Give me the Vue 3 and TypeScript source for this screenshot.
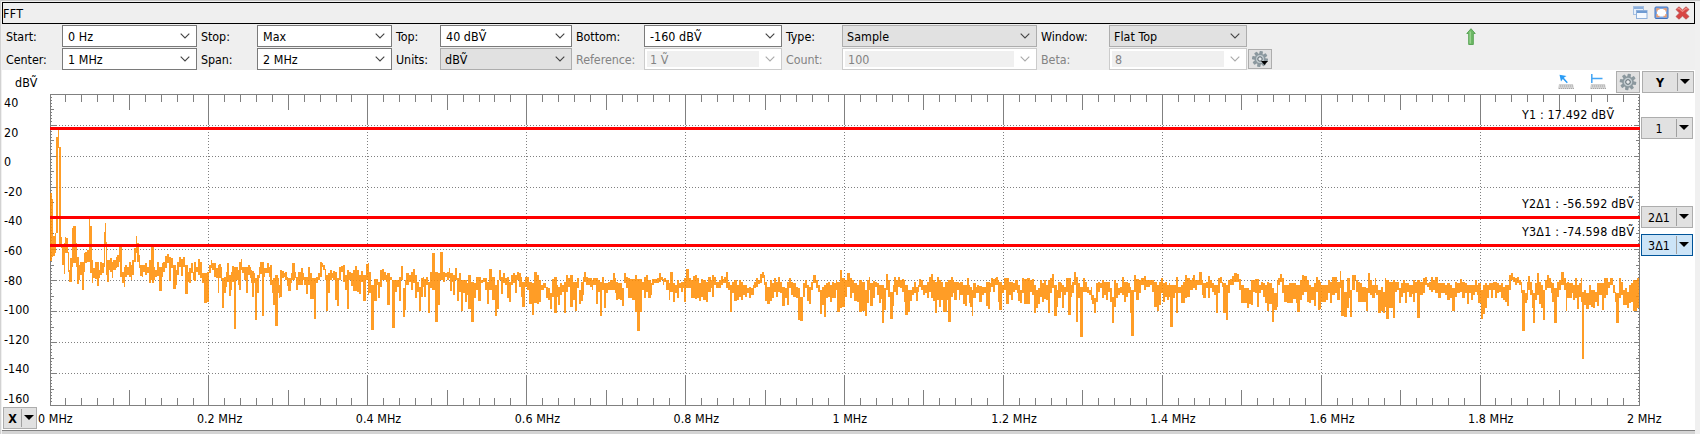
<script setup lang="ts">
interface Field {
  label: string
  value: string
  kind: 'edit' | 'list' | 'off'
}

const fields: Field[] = [
  { label: 'Start:', value: '0 Hz', kind: 'edit' },
  { label: 'Stop:', value: 'Max', kind: 'edit' },
  { label: 'Top:', value: '40 dBṼ', kind: 'edit' },
  { label: 'Bottom:', value: '-160 dBṼ', kind: 'edit' },
  { label: 'Type:', value: 'Sample', kind: 'list' },
  { label: 'Window:', value: 'Flat Top', kind: 'list' },
  { label: 'Center:', value: '1 MHz', kind: 'edit' },
  { label: 'Span:', value: '2 MHz', kind: 'edit' },
  { label: 'Units:', value: 'dBṼ', kind: 'list' },
  { label: 'Reference:', value: '1 Ṽ', kind: 'off' },
  { label: 'Count:', value: '100', kind: 'off' },
  { label: 'Beta:', value: '8', kind: 'off' },
]

const yLabels = [40, 20, 0, -20, -40, -60, -80, -100, -120, -140, -160]
const xLabels = ['0', '0.2', '0.4', '0.6', '0.8', '1', '1.2', '1.4', '1.6', '1.8', '2']

const W = 1590
const H = 312

// Frequency ticks, mirrored on the top and bottom edges
let xTicks = ''
let vGrid = ''
for (let k = 1; k < 100; k++) {
  const x = Math.floor(k * 15.89) + 0.5
  const major = k % 10 === 0
  const len = major ? 31 : k % 5 === 0 ? 16 : 8
  xTicks += `M${x} 0V${len}M${x} ${H}V${H - len}`
  if (major) vGrid += `M${x} 32V280`
}

// Level ticks, mirrored on the left and right edges
let yTicks = ''
let hGrid = ''
for (let k = 1; k < 100; k++) {
  const y = Math.floor(k * 3.11) + 0.5
  const major = k % 10 === 0
  const len = major ? 6 : k % 5 === 0 ? 4 : 2
  yTicks += `M0 ${y}H${len}M${W} ${y}H${W - len}`
  if (major) hGrid += `M6 ${y}H${W - 6}`
}

// Spectrum envelope: "start top bottom" in thirds of a pixel; each bar runs to the next start
interface Segment {
  x: number
  y: number
  end: number
  bars: string
}

const segments: Segment[] = [
  { x: -20, y: -4, end: 375, bars: `61 310 512;66 328 500;69 438 498;76 428 488;79 142 430;83 118 175;88 172 465;93 442 475;97 465 525;101 460 553;105 440 490;108 443 490;113 485 545;117 540 577;121 505 575;126 415 530;130 408 518;137 460 530;141 500 582;146 525 570;150 515 555;156 515 600;161 490 545;166 485 520;171 480 515;177 388 515;181 408 550;185 510 580;190 535 565;195 515 568;200 515 588;206 540 565;209 515 555;216 520 550;221 425 530;224 400 465;229 455 555;232 510 575;236 510 540;241 505 545;246 515 565;250 510 540;257 500 535;262 495 530;267 470 515;271 470 560;277 545 580;281 530 590;286 525 560;292 530 555;298 515 560;303 525 570;307 510 555;313 475 515;317 438 490;322 460 515;326 495 535;330 525 558;335 525 560;340 525 545;346 520 555;352 530 550;357 510 580;362 470 570;367 470 580;372 530 570` },
  { x: -50, y: -4, end: 810, bars: `465 540 560;470 515 557;478 530 602;485 520 560;490 515 545;496 497 535;502 492 520;508 500 572;513 505 535;519 525 597;527 540 585;532 515 555;537 502 530;543 508 558;549 502 530;555 525 612;563 545 575;567 535 580;572 520 548;578 545 570;583 515 572;588 530 545;594 507 555;600 515 565;606 550 578;612 550 640;620 545 637;627 525 550;632 510 535;637 520 540;642 520 560;647 533 565;653 525 608;657 522 565;662 530 570;666 565 655;672 560 608;677 545 590;682 520 575;686 555 617;692 545 600;697 528 575;701 530 717;708 530 570;714 540 585;718 515 600;722 508 540;727 530 550;732 530 570;738 530 608;743 525 555;749 530 565;753 540 580;757 542 622;762 548 580;766 565 690;771 555 610;776 530 565;781 515 552;787 515 678;791 535 560;796 535 550;801 518 550;806 530 560` },
  { x: 220, y: 136, end: 1050, bars: `0 105 165;5 150 190;8 145 225;15 135 288;24 145 190;28 165 203;31 120 200;36 122 145;41 128 140;46 125 150;51 140 168;55 143 182;62 130 160;67 100 150;74 125 145;79 140 180;85 125 165;92 115 165;98 130 150;103 140 165;109 140 193;115 112 165;121 130 208;127 145 208;132 145 267;138 140 160;143 130 150;149 95 140;155 98 112;160 105 120;165 118 150;168 135 243;174 130 190;180 120 150;185 130 145;190 123 150;195 125 210;202 145 227;208 110 150;214 108 125;220 105 155;226 135 180;230 120 237;237 125 150;243 130 168;249 120 182;255 108 182;262 120 185;267 135 192;273 122 155;280 135 212;287 103 150;294 100 195;298 125 190;303 165 300;311 148 212;320 148 165;325 155 205;331 120 170;337 118 150;342 125 150;348 135 155;352 130 225;360 140 150;366 150 293;374 150 185;380 150 170;387 140 212;392 108 150;398 150 200;400 175 260;406 150 240;408 130 165;416 135 155;424 125 180;430 118 160;435 135 203;441 155 185;446 170 243;452 145 200;458 140 170;463 148 200;468 140 165;474 155 248;480 125 175;487 70 180;496 125 275;504 130 225;510 65 150;520 125 155;525 130 140;531 125 150;536 115 145;539 130 182;545 130 155;550 135 195;556 115 150;562 145 212;568 130 185;573 150 243;579 150 190;585 150 215;590 160 195;595 135 237;602 155 275;611 160 205;617 140 180;624 140 212;632 150 160;640 145 155;646 145 180;652 155 222;658 118 180;667 140 210;674 165 258;681 150 237;686 120 150;694 140 192;699 130 160;706 145 165;711 140 205;716 155 215;722 135 165;730 130 160;736 135 190;742 125 150;748 130 170;752 140 200;757 155 230;765 140 170;770 140 180;776 155 222;785 160 255;793 125 220;801 135 222;807 150 215;812 165 180;818 160 180;822 160 175;828 170 205;834 175 210;840 190 237;846 148 200;852 142 248;860 165 200;865 170 225;871 160 195;876 165 185;881 155 248;887 135 185;894 145 170;900 135 230;909 155 210;915 155 243;922 145 175;926 180 222;932 155 212;938 140 195;943 125 155;949 140 165;954 145 165;960 145 170;965 150 180;970 145 165;978 145 222;984 150 185;990 155 258;996 140 180;1003 160 233;1009 160 190;1015 155 180;1020 150 180;1028 130 180;1034 145 190;1038 155 210;1044 160 208` },
  { x: 570, y: 136, end: 1050, bars: `0 160 210;5 175 228;12 130 160;17 140 175;23 145 203;30 148 203;36 148 210;45 135 245;51 148 303;59 148 245;66 155 180;71 140 205;79 135 185;85 150 205;92 160 195;97 148 165;103 148 160;110 145 160;116 130 155;122 140 150;128 148 165;133 145 155;138 150 180;146 160 210;150 125 185;158 160 215;166 165 190;171 150 205;178 160 175;183 155 185;189 155 175;193 145 215;198 118 175;208 145 175;213 150 203;218 137 205;225 135 207;232 145 205;238 160 212;243 148 200;250 150 210;258 155 217;265 140 185;272 150 175;277 135 200;283 140 165;289 155 175;296 150 175;302 138 165;308 148 160;313 140 160;318 125 175;325 155 180;330 165 245;336 155 190;342 150 212;350 165 210;357 150 200;362 155 210;368 165 195;374 165 200;380 175 190;386 170 205;392 175 195;398 165 195;402 155 175;408 145 170;414 150 163;420 133 160;425 125 145;432 135 165;436 155 212;442 170 222;450 150 212;457 160 203;462 145 185;468 155 200;474 140 185;480 155 190;486 170 227;494 175 203;500 155 225;506 145 175;513 155 195;520 160 200;527 170 205;533 175 270;539 200 272;548 160 200;554 150 175;560 165 212;568 170 222;574 155 180;580 135 160;588 150 175;594 165 185;600 180 253;606 170 225;612 165 260;618 160 205;625 155 200;630 165 215;636 155 205;642 160 205;648 150 180;652 155 245;660 120 235;666 145 230;675 150 200;681 128 170;690 145 205;697 150 190;703 160 212;712 165 217;718 150 245;727 155 243;735 180 258;741 150 220;746 140 180;751 160 227;758 153 205;764 155 170;770 160 195;776 165 220;782 165 208;786 165 278;792 175 240;797 133 180;804 150 200;809 185 267;818 165 227;822 140 185;828 150 195;834 140 170;839 150 175;845 148 185;851 150 215;856 165 255;863 180 245;870 180 212;876 170 195;881 155 190;887 170 212;893 165 185;898 148 170;904 150 180;910 165 195;916 165 190;921 155 205;927 140 185;933 132 205;939 150 212;946 155 248;952 140 210;958 150 230;964 155 210;969 170 245;975 155 245;981 155 210;985 150 275;992 140 200;998 150 190;1003 155 210;1010 155 180;1016 160 210;1020 155 195;1028 165 222;1034 165 228;1040 145 195;1047 165 220` },
  { x: 920, y: 136, end: 1050, bars: `0 170 230;5 180 258;10 160 205;17 170 190;22 165 190;28 168 215;36 170 195;42 170 190;47 155 228;53 155 237;60 160 185;64 145 170;69 148 185;74 143 165;79 140 165;84 150 215;88 155 240;96 165 190;101 145 180;107 145 222;116 155 195;124 155 210;130 160 185;135 150 180;140 150 190;145 165 212;150 180 218;155 145 190;162 148 222;172 145 222;179 150 185;185 148 195;191 165 248;198 180 235;205 175 222;210 150 200;216 160 215;222 150 208;228 165 210;234 150 248;240 145 190;246 132 175;252 165 258;260 180 232;265 155 205;272 160 185;276 165 233;283 170 195;288 145 185;295 145 255;302 165 200;307 155 190;312 127 165;318 140 275;324 160 205;330 170 320;339 145 185;345 155 185;350 170 190;356 180 195;362 172 210;367 195 222;371 205 250;378 160 215;384 157 185;390 160 175;396 150 203;402 155 195;408 155 210;414 155 185;420 175 215;425 200 278;431 150 230;437 160 203;443 175 195;449 170 190;456 142 195;461 155 215;467 155 200;473 160 190;480 170 250;484 180 318;491 135 185;498 148 210;508 150 190;514 145 165;521 138 180;527 150 170;533 150 170;539 150 165;545 150 185;551 155 232;560 165 243;568 155 225;573 145 190;578 160 215;584 155 200;590 165 210;596 160 200;600 165 290;609 165 205;614 165 190;618 140 250;625 170 190;633 165 218;640 155 218;646 135 205;652 145 200;659 150 180;665 145 180;670 135 175;676 150 180;682 150 165;688 127 165;696 150 195;700 160 205;707 155 175;713 137 205;719 150 175;725 160 185;731 165 195;738 165 250;744 145 190;750 140 160;756 155 170;760 160 248;768 165 270;774 150 190;780 148 165;785 138 165;791 130 155;800 133 155;806 148 180;812 165 220;822 175 218;830 175 235;838 180 222;843 150 225;848 150 185;855 148 190;861 148 230;867 165 190;873 155 180;878 160 200;885 165 218;892 155 242;898 160 222;905 175 275;912 190 240;920 150 230;924 143 165;930 132 155;936 145 190;943 165 215;952 165 218;958 160 220;970 160 208;977 165 218;982 165 245;990 150 210;996 135 195;1003 138 185;1010 150 215;1017 165 218;1024 170 210;1032 160 228;1038 140 185;1044 150 240` },
  { x: 1270, y: 136, end: 957, bars: `0 155 238;4 165 215;10 165 215;17 165 210;24 150 190;30 155 220;35 140 195;45 140 190;52 155 210;60 123 175;64 150 258;72 185 262;80 145 235;86 145 205;91 180 260;97 135 180;104 135 150;109 150 185;113 155 215;120 158 215;127 170 215;133 172 215;139 175 242;145 130 190;151 150 195;157 165 205;164 145 190;169 165 195;175 180 248;182 170 243;188 185 248;194 145 230;199 150 267;206 155 235;214 155 235;220 150 263;226 155 185;232 155 180;237 175 218;244 160 200;250 150 188;256 160 220;262 160 185;268 165 200;275 165 193;280 150 215;286 155 190;292 150 263;300 155 195;308 145 190;315 140 165;321 158 170;327 155 180;333 142 185;339 150 180;346 140 190;353 160 205;358 160 205;364 158 190;370 158 190;376 165 195;382 160 210;390 165 205;397 175 242;405 155 200;411 160 190;417 160 190;420 148 185;427 155 205;434 160 190;440 165 222;446 165 190;452 165 210;458 165 195;466 150 185;470 165 195;475 160 220;483 180 267;488 165 252;495 160 235;502 165 205;508 158 180;514 158 205;520 155 180;526 155 205;532 160 190;538 165 185;544 160 205;550 170 210;555 165 217;562 165 228;568 135 180;573 130 150;578 142 155;585 145 165;591 140 160;597 150 165;602 155 190;607 180 303;615 190 220;620 155 210;625 137 180;630 155 195;635 180 235;640 190 278;646 160 210;652 130 195;658 155 222;664 165 235;668 180 270;674 150 180;680 135 175;686 145 175;692 155 190;697 160 215;703 175 280;711 155 200;718 150 180;724 125 165;732 145 180;737 160 243;741 155 205;748 160 205;755 160 190;760 165 210;766 145 205;772 165 237;778 160 200;783 145 215;787 185 387;792 180 225;799 190 237;806 165 225;812 180 230;818 180 235;826 185 215;832 160 228;838 160 195;845 160 240;852 145 205;858 145 195;864 155 175;870 145 165;878 165 190;885 185 215;889 190 278;897 145 205;903 155 195;909 180 225;915 175 225;921 185 235;927 165 218;933 160 215;940 150 243;950 145 235` },
]

function tracePath(): string {
  let d = ''
  for (const seg of segments) {
    const bars = seg.bars.split(';').map((b) => b.split(' ').map(Number))
    bars.forEach(([start, top, bottom], i) => {
      const next = i + 1 < bars.length ? bars[i + 1][0] : seg.end
      const x0 = seg.x + Math.round(start / 3)
      const x1 = seg.x + Math.round(next / 3)
      const y0 = seg.y + Math.round(top / 3)
      const y1 = seg.y + Math.round(bottom / 3)
      d += `M${x0} ${y0}H${x1}V${y1}H${x0}Z`
    })
  }
  return d
}
const trace = tracePath()

const markers = [
  { text: 'Y1 : 17.492 dBṼ', line: 33, base: 25, len: 92, button: '1', cls: 'm1' },
  { text: 'Y2Δ1 : -56.592 dBṼ', line: 122, base: 114, len: 112, button: '2Δ1', cls: 'm2' },
  { text: 'Y3Δ1 : -74.598 dBṼ', line: 150, base: 142, len: 112, button: '3Δ1', cls: 'm3' },
]

const teeth = [0, 45, 90, 135, 180, 225, 270, 315]
</script>

<template>
  <div class="window">
    <header class="titlebar">
      <span class="title">FFT</span>
      <svg class="win-icon" viewBox="0 0 15 14">
        <rect x=".5" y=".5" width="10" height="8" fill="#e8f1fb" stroke="#a5c0e2" />
        <path d="M1 2h9" stroke="#8db0dc" stroke-width="2" />
        <rect x="3.5" y="4.500" width="10.500" height="8" fill="#f4f9ff" stroke="#8fb0da" />
        <path d="M4 6h10" stroke="#6f9bd2" stroke-width="2" />
      </svg>
      <svg class="win-icon" viewBox="0 0 15 14">
        <rect x="1" y="1" width="13" height="11.500" rx="1" fill="#7fa9e4" stroke="#4272bd" />
        <rect x="3" y="3" width="9" height="7.500" rx="2" fill="#fff" />
        <path d="M3 5.500V3h2.500M9.500 3H12v2.500M12 8v2.500H9.500M5.500 10.500H3V8" fill="none" stroke="#ee9a68" stroke-width="1.300" />
      </svg>
      <svg class="win-icon" viewBox="0 0 15 14">
        <path d="M1 3.500L4 .8 7.500 4 11 .8 14 3.500 10.500 7 14 10.500 11 13.200 7.500 10 4 13.200 1 10.500 4.500 7Z" fill="#d84543" stroke="#b95050" stroke-width=".8" />
        <path d="M2.500 3.300L4 2.200 7.500 5.500 11 2.200l1.500 1.100" fill="none" stroke="#ef8d86" stroke-width="1.200" />
      </svg>
    </header>

    <section class="toolbar">
      <div class="fields">
        <template v-for="f in fields" :key="f.label">
          <label class="label" :class="{ dim: f.kind === 'off' }">{{ f.label }}</label>
          <div class="combo" :class="f.kind">
            <span class="value">{{ f.value }}</span>
            <svg class="chevron" viewBox="0 0 10 6"><path d="M.7.7L5 5 9.300.7" /></svg>
          </div>
        </template>
      </div>
      <button class="gear-btn small">
        <svg viewBox="0 0 18 18" class="gear">
          <g fill="#8b989e">
            <rect v-for="a in teeth" :key="a" x="7.300" y="1" width="3.400" height="4" rx=".8" :transform="`rotate(${a + 10} 9 9)`" />
          </g>
          <circle cx="9" cy="9" r="4.700" fill="#c3ccd0" stroke="#8b989e" stroke-width="1.500" />
          <circle cx="9" cy="9" r="2.200" fill="#e8ebed" stroke="#5a676e" />
          <path d="M10 11h7l-3.500 4z" fill="#000" />
        </svg>
      </button>
      <svg class="up" viewBox="0 0 10 18">
        <path d="M5 .7L9.200 5.500H7.300V16.500H2.700V5.500H.8Z" fill="#6db865" stroke="#5aa557" />
        <path d="M4.200 3.500V15.500" stroke="#a3d99a" stroke-width="1.200" />
      </svg>
    </section>

    <main class="chart">
      <div class="chart-head">
        <span class="unit">dBṼ</span>
        <svg class="tool" viewBox="0 0 16 16">
          <path d="M1.500.7L8.500 2 5.800 3.800 9.800 8.200 8.800 9.200 4.800 5 3 7.500Z" fill="#2b9cf5" />
          <path d="M1 10h14l1 5H0z" fill="#d2d2d2" />
          <path d="M2 12h13M1 14.500h15" stroke="#a8a8a8" stroke-dasharray="1 1" />
        </svg>
        <svg class="tool" viewBox="0 0 16 16">
          <path d="M1.800 0V9M1.800 4.500H12.500" fill="none" stroke="#42a5f5" stroke-width="1.500" />
          <path d="M1 10h14l1 5H0z" fill="#d2d2d2" />
          <path d="M2 12h13M1 14.500h15" stroke="#a8a8a8" stroke-dasharray="1 1" />
        </svg>
        <button class="gear-btn">
          <svg viewBox="0 0 18 18" class="gear">
            <g fill="#8b989e">
              <rect v-for="a in teeth" :key="a" x="7.300" y=".7" width="3.400" height="4" rx=".8" :transform="`rotate(${a + 10} 9 9)`" />
            </g>
            <circle cx="9" cy="9" r="5" fill="#c3ccd0" stroke="#8b989e" stroke-width="1.500" />
            <circle cx="9" cy="9" r="2.300" fill="#e8ebed" stroke="#5a676e" />
          </svg>
        </button>
        <button class="split">
          <b class="split-text">Y</b><i class="drop"></i>
        </button>
      </div>

      <div class="chart-body">
        <div class="y-axis">
          <span v-for="y in yLabels" :key="y">{{ y }}</span>
        </div>
        <svg class="plot" :viewBox="`0 0 ${W} ${H}`">
          <g class="lines">
            <path :d="hGrid" class="grid" />
            <path :d="vGrid" class="grid" />
            <path :d="xTicks" />
            <path :d="yTicks" />
            <path d="M.5 .5H1589.500V311.500H.5Z" />
          </g>
          <path :d="trace" class="trace" />
          <g v-for="m in markers" :key="m.cls">
            <rect x="0" :y="m.line" :width="W" height="3" fill="#f00" />
            <text x="1472" :y="m.base" :textLength="m.len">{{ m.text }}</text>
          </g>
        </svg>
        <div class="marker-buttons">
          <button v-for="m in markers" :key="m.cls" class="split" :class="m.cls">
            <span class="split-text">{{ m.button }}</span><i class="drop"></i>
          </button>
        </div>
      </div>

      <div class="x-axis">
        <button class="split x-btn"><b class="split-text">X</b><i class="drop"></i></button>
        <span v-for="x in xLabels" :key="x" class="x-label">{{ x }} MHz</span>
      </div>
    </main>
    <footer class="bottom-edge"></footer>
  </div>
</template>

<style>
body {
  background: #f0f0f0;
  overflow: hidden;
}
</style>

<style scoped>
.window {
  box-sizing: border-box;
  width: 1700px;
  height: 434px;
  padding-right: 5px;
  border-left: 1px solid #d2d2d2;
  border-top: 1px solid #c8c8c8;
  background: #f0f0f0;
  font-family: "DejaVu Sans Condensed", "DejaVu Sans", sans-serif;
  font-stretch: condensed;
  font-size: 12.4px;
  line-height: 16px;
  letter-spacing: 0.05px;
  color: #000;
  overflow: hidden;
}
button {
  box-sizing: border-box;
  padding: 0;
  font: inherit;
  letter-spacing: inherit;
  color: inherit;
  background: #e1e1e1;
  border: 1px solid #adadad;
}
.titlebar {
  box-sizing: border-box;
  display: flex;
  align-items: center;
  gap: 6px;
  height: 22px;
  margin: 1px 0 0 1px;
  padding: 0 4px 0 0;
  border: 1px solid #000;
  background: #efefef;
}
.title {
  flex: 1;
  padding-top: 2px;
  letter-spacing: 0.3px;
}
.win-icon {
  width: 15px;
  height: 14px;
}
.toolbar {
  display: flex;
  height: 46px;
  margin-left: 1px;
  background: #efefef;
}
.fields {
  display: grid;
  grid-template-columns: 60px 135px 60px 135px 48px 132px 72px 138px 60px 195px 72px 138px;
  grid-template-rows: 22px 22px;
  row-gap: 1px;
  padding-top: 1px;
}
.label {
  padding-left: 4px;
  line-height: 24px;
  letter-spacing: -0.05px;
}
.dim {
  color: #838383;
}
.combo {
  box-sizing: border-box;
  display: flex;
  align-items: center;
  border: 1px solid #7a7a7a;
  background: #fff;
  padding: 2px 6px 2px 2px;
}
.value {
  flex: 1;
  padding-left: 3px;
  height: 16px;
  line-height: 18px;
}
.chevron {
  width: 10px;
  height: 6px;
  fill: none;
  stroke: #444;
  stroke-width: 1.1;
}
.list {
  background: #e1e1e1;
  border-color: #adadad;
}
.list .value {
  padding-left: 2px;
}
.off {
  border-color: #ccc;
  color: #838383;
}
.off .value {
  background: #f0f0f0;
  margin-right: 6px;
}
.off .chevron {
  stroke: #aaa;
}
.gear-btn {
  display: flex;
  align-items: center;
  justify-content: center;
  width: 24px;
  height: 22px;
}
.gear-btn.small {
  height: 20px;
  margin: 25px 0 0 1px;
}
.gear {
  flex: none;
  width: 18px;
  height: 18px;
}
.up {
  width: 10px;
  height: 18px;
  margin: 4px 0 0 194px;
}
.chart {
  background: #fff;
  margin-left: 1px;
  height: 360px;
}
.chart-head {
  display: flex;
  height: 24px;
  padding-right: 1px;
}
.unit {
  flex: 1;
  padding: 5px 0 0 13px;
}
.tool {
  width: 16px;
  height: 16px;
  margin: 4px 16px 0 0;
}
.tool:first-of-type {
  margin-left: -1px;
}
.tool + .gear-btn {
  margin-left: -6px;
}
.chart-head .gear-btn,
.chart-head .split {
  margin-top: 1px;
}
.chart-head .split {
  margin-left: 2px;
}
.split {
  display: flex;
  align-items: center;
  width: 52px;
  height: 22px;
}
.split-text {
  flex: 1;
  text-align: center;
  padding-top: 1px;
}
.drop {
  box-sizing: border-box;
  display: flex;
  width: 16px;
  height: 18px;
  padding: 0 0 1px 2px;
  align-items: center;
  border-left: 1px solid #a0a0a0;
}
.drop::after {
  content: "";
  border: 5px solid transparent;
  border-top: 5px solid #000;
  border-bottom: 0;
}
.chart-body {
  display: flex;
  height: 312px;
}
.y-axis {
  display: flex;
  flex-direction: column;
  justify-content: space-between;
  width: 46px;
  height: 312px;
  padding-left: 2px;
}
.y-axis span {
  height: 16px;
  line-height: 18px;
}
.plot {
  width: 1590px;
  height: 312px;
}
.plot text {
  letter-spacing: 0;
}
.lines path {
  fill: none;
  stroke: #808080;
  shape-rendering: crispEdges;
}
.lines .grid {
  stroke-dasharray: 1 2;
}
.trace {
  fill: #ff8c00;
  opacity: 0.85;
  shape-rendering: crispEdges;
}
.marker-buttons {
  padding-left: 1px;
}
.m1 {
  margin-top: 23px;
}
.m2 {
  margin-top: 67px;
}
.m3 {
  margin-top: 6px;
  background: #cce4f7;
  border-color: #005499;
}
.x-axis {
  display: flex;
  height: 24px;
  overflow: hidden;
}
.x-btn {
  flex: none;
  width: 34px;
  margin: 1px 1px 0 1px;
}
.x-btn .drop {
  width: 15px;
}
.x-label {
  flex: none;
  width: 158.9px;
  line-height: 26px;
}
.bottom-edge {
  height: 4px;
  margin-left: 1px;
  border-top: 1px solid #808080;
  background: #d4d4d4;
}
</style>
